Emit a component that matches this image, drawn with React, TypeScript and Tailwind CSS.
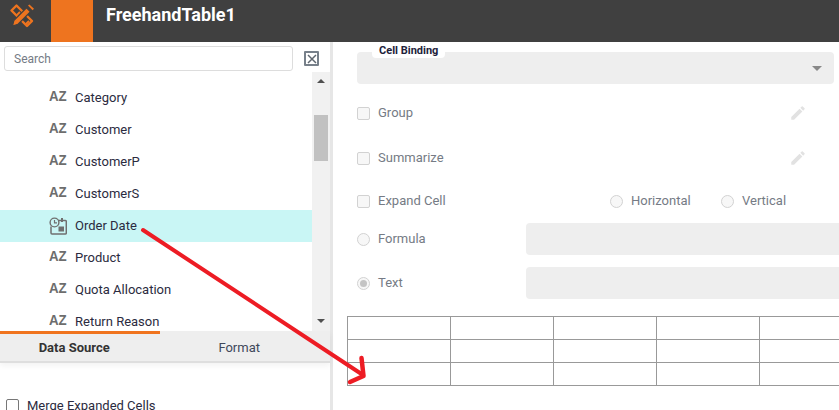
import React from "react";

const fields = ["Category", "Customer", "CustomerP", "CustomerS", "Order Date", "Product", "Quota Allocation", "Return Reason"];

const LogoIcon = () => (
    <svg width="26" height="26" viewBox="0 0 26 26" fill="none">
        <path d="M2.5 7.5 L7.5 2.5 L23 18 L18 23 Z" stroke="#ee741f" strokeWidth="2.4" strokeLinejoin="round" />
        <path d="M8 12 L11 9 M12.5 16.5 L15.5 13.5 M17 21 L20 18" stroke="#ee741f" strokeWidth="2" />
        <path d="M3.5 23 L4.8 17.5 L17.5 4.8 L21.5 8.7 L8.8 21.4 Z" fill="#ee741f" stroke="#404040" strokeWidth="1.2" />
        <path d="M19 2.6 L20.4 1.4 L25 5.8 L23.6 7.2 Z" fill="#ee741f" />
    </svg>
);

const DateIcon = () => (
    <svg width="18" height="18" viewBox="0 0 18 18" fill="none">
        <path d="M9 3.5 H16.5 a0.8 0.8 0 0 1 0.8 0.8 V16 a1 1 0 0 1 -1 1 H3 a1 1 0 0 1 -1 -1 V9.5" stroke="#6f6f6f" strokeWidth="1.5" />
        <circle cx="5.5" cy="5.5" r="4.4" fill="#c9f6f5" stroke="#6f6f6f" strokeWidth="1.4" />
        <path d="M5.5 3 V5.8 H8" stroke="#6f6f6f" strokeWidth="1.2" />
        <rect x="9.5" y="9.5" width="5.5" height="5" fill="#6f6f6f" />
        <rect x="12" y="1" width="2" height="4" fill="#6f6f6f" />
    </svg>
);

const PencilIcon = () => (
    <svg width="18" height="18" viewBox="0 0 24 24" fill="#e2e2e2">
        <path d="M3 17.25V21h3.75L17.81 9.94l-3.75-3.75L3 17.25zM20.71 7.04a1 1 0 0 0 0-1.41l-2.34-2.34a1 1 0 0 0-1.41 0l-1.83 1.83 3.75 3.75 1.83-1.83z" />
    </svg>
);

const Check = () => (
    <span className="w-[13px] h-[13px] shrink-0 rounded-[2px] border border-[#d2d2d2] bg-[#f7f7f7]" />
);

const Radio = ({ on }: { on?: boolean }) => (
    <span className="w-[13px] h-[13px] shrink-0 rounded-full border border-[#d2d2d2] bg-[#f7f7f7] flex items-center justify-center">
        {on && <span className="w-[7px] h-[7px] rounded-full bg-[#c4c4c4]" />}
    </span>
);

export default function App() {
    return (
        <div className="relative flex flex-col w-[839px] h-[410px] overflow-hidden bg-white font-['Roboto',sans-serif]">
            <div className="flex h-[42px] shrink-0 bg-[#404040]">
                <div className="w-[51px] pl-[9px] pt-[3px]">
                    <LogoIcon />
                </div>
                <div className="w-[42px] bg-[#ee741f]" />
                <div className="pl-[13px] pt-[2px] text-[18px] leading-[26px] font-bold text-white">FreehandTable1</div>
            </div>

            <div className="flex flex-1 min-h-0">
                <div className="flex flex-col w-[333px] shrink-0 border-r-[3px] border-[#e6e6e6]">
                    <div className="flex items-center h-[30px] shrink-0 pl-[4px] pt-[3px]">
                        <div className="flex items-center w-[289px] h-[25px] px-[9px] rounded-[3px] border border-[#dddddd] text-[12px] text-[#757b85]">
                            Search
                        </div>
                        <div className="flex items-center justify-center w-[15px] h-[15px] ml-[11px] border-2 border-[#77808a] rounded-[1px]">
                            <svg width="10" height="10" viewBox="0 0 10 10" stroke="#5f6770" strokeWidth="1.5">
                                <path d="M1 1 L9 9 M9 1 L1 9" />
                            </svg>
                        </div>
                    </div>

                    <div className="flex h-[259px] shrink-0 overflow-hidden">
                        <div className="flex-1 pt-[10px]">
                            {fields.map((name) => (
                                <div key={name} className={`flex items-center h-[32px] ${name === "Order Date" ? "bg-[#c9f6f5]" : ""}`}>
                                    <div className="flex justify-start w-[75px] pl-[49px] shrink-0">
                                        {name === "Order Date" ? (
                                            <DateIcon />
                                        ) : (
                                            <span className="relative top-[-2px] inline-block text-[14px] leading-[14px] font-bold text-[#6d6d6d] origin-left scale-x-[0.95] font-['Liberation_Sans',sans-serif]">AZ</span>
                                        )}
                                    </div>
                                    <span className="text-[13px] text-[#2b2b40]">{name}</span>
                                </div>
                            ))}
                        </div>
                        <div className="flex flex-col items-center w-[18px] shrink-0 bg-[#f1f1f1]">
                            <div className="mt-[7px] w-0 h-0 border-x-[4px] border-x-transparent border-b-[4px] border-b-[#505050]" />
                            <div className="mt-[32px] w-[14px] h-[46px] bg-[#c1c1c1]" />
                            <div className="mt-auto mb-[8px] w-0 h-0 border-x-[4px] border-x-transparent border-t-[4px] border-t-[#505050]" />
                        </div>
                    </div>

                    <div className="relative flex h-[32px] shrink-0 bg-[#eeeeee] border-b-2 border-[#dedede] shadow-[0_3px_6px_rgba(0,0,0,0.05)]">
                        <div className="absolute left-0 top-0 w-[160px] h-[3px] bg-[#f0741e]" />
                        <div className="flex items-center justify-center w-[152px] pt-[3px] text-[13px] font-bold text-[#333333]">Data Source</div>
                        <div className="flex items-center justify-center w-[186px] pt-[3px] text-[13px] text-[#40485a]">Format</div>
                    </div>

                    <div className="flex items-center gap-[8px] mt-[33px] pl-[6px]">
                        <span className="w-[13px] h-[13px] shrink-0 rounded-[2px] border border-[#777777]" />
                        <span className="text-[13px] text-[#2b2b40] whitespace-nowrap">Merge Expanded Cells</span>
                    </div>
                </div>

                <div className="flex flex-col flex-1 min-w-0 overflow-hidden text-[13px] text-[#757b85]">
                    <div className="relative ml-[24px] mr-[5px] mt-[10px] h-[32px] shrink-0 rounded-[4px] bg-[#eeeeee]">
                        <div className="absolute left-[15px] top-[-8px] h-[14px] px-[7px] rounded-b-[4px] bg-white text-[11px] leading-[14px] font-bold text-[#22223a]">Cell Binding</div>
                        <div className="absolute right-[12px] top-[14px] w-0 h-0 border-x-[5px] border-x-transparent border-t-[5px] border-t-[#888888]" />
                    </div>

                    <div className="flex items-center h-[32px] shrink-0 mt-[13px] ml-[24px] gap-[8px]">
                        <Check />
                        <span>Group</span>
                        <span className="ml-auto mr-[32px] flex"><PencilIcon /></span>
                    </div>
                    <div className="flex items-center h-[32px] shrink-0 mt-[13px] ml-[24px] gap-[8px]">
                        <Check />
                        <span>Summarize</span>
                        <span className="ml-auto mr-[32px] flex"><PencilIcon /></span>
                    </div>

                    <div className="flex items-center h-[32px] shrink-0 mt-[11px] ml-[24px]">
                        <div className="flex items-center gap-[8px] w-[253px]">
                            <Check />
                            <span>Expand Cell</span>
                        </div>
                        <div className="flex items-center gap-[8px] w-[111px]">
                            <Radio />
                            <span>Horizontal</span>
                        </div>
                        <div className="flex items-center gap-[8px]">
                            <Radio />
                            <span>Vertical</span>
                        </div>
                    </div>

                    <div className="flex items-center h-[32px] shrink-0 mt-[6px] ml-[24px]">
                        <div className="flex items-center gap-[8px] w-[169px]">
                            <Radio />
                            <span>Formula</span>
                        </div>
                        <div className="flex-1 h-full rounded-l-[4px] bg-[#eeeeee]" />
                    </div>
                    <div className="flex items-center h-[32px] shrink-0 mt-[12px] ml-[24px]">
                        <div className="flex items-center gap-[8px] w-[169px]">
                            <Radio on />
                            <span>Text</span>
                        </div>
                        <div className="flex-1 h-full rounded-l-[4px] bg-[#eeeeee]" />
                    </div>

                    <table className="ml-[14px] mt-[17px] w-[516px] shrink-0 table-fixed border-collapse">
                        <tbody>
                            {[0, 1, 2].map((r) => (
                                <tr key={r} className="h-[23px]">
                                    {[0, 1, 2, 3, 4].map((c) => (
                                        <td key={c} className="w-[103px] p-0 border border-[#999999]" />
                                    ))}
                                </tr>
                            ))}
                        </tbody>
                    </table>
                </div>
            </div>

            {/* hand drawn arrow on top of the screenshot */}
            <svg className="absolute left-0 top-0 pointer-events-none" width="839" height="410" fill="none" stroke="#ed1c24" strokeLinecap="round" strokeLinejoin="round">
                <path d="M143 230 L363 375" strokeWidth="4" />
                <path d="M361.5 358 L363.5 376 L350 382" strokeWidth="4.5" />
            </svg>
        </div>
    );
}
